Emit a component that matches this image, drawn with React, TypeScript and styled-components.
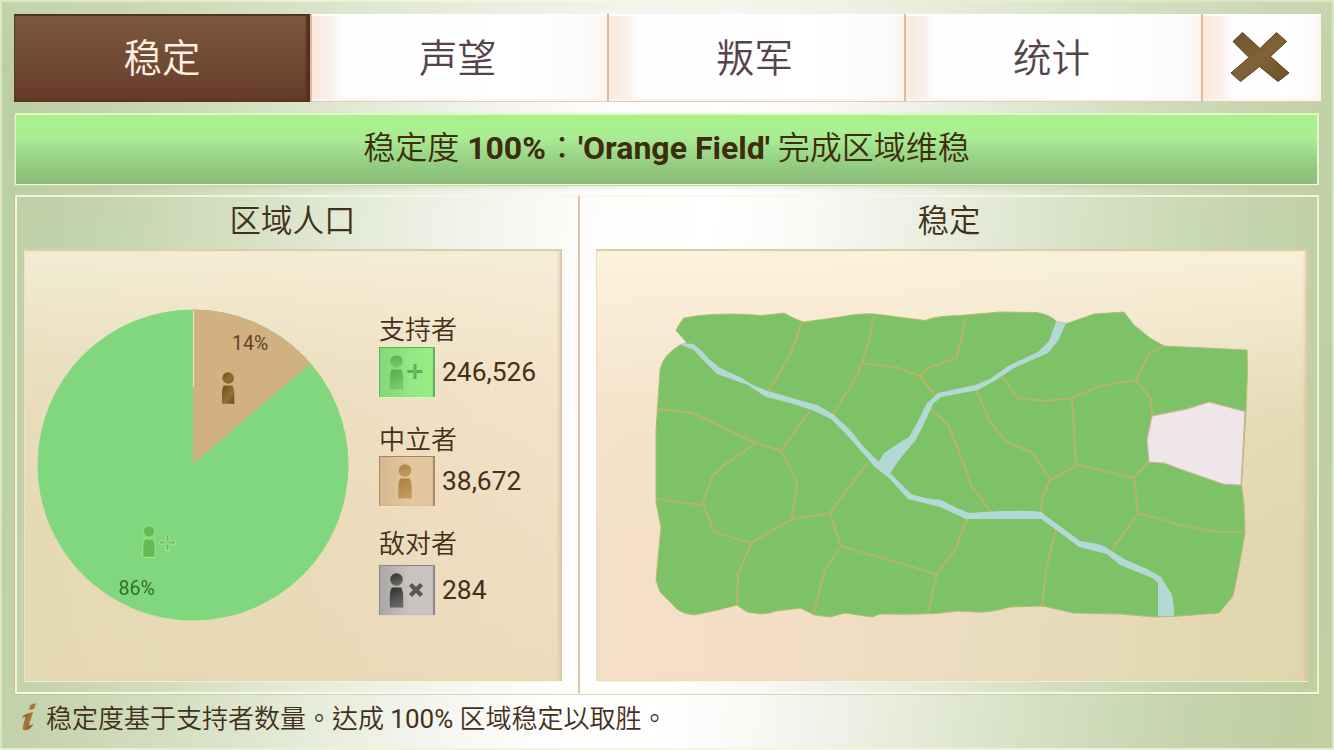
import React from "react";
import styled, { createGlobalStyle } from "styled-components";

const GlobalStyle = createGlobalStyle`
  * { box-sizing: border-box; }
  html, body { margin: 0; padding: 0; }
  body { font-family: Roboto, "Noto Sans CJK TC", sans-serif; overflow: hidden; }
`;

const Screen = styled.main`
  width: 1334px;
  height: 750px;
  padding: 12px 12px 0 13px;
  display: flex;
  flex-direction: column;
  color: #43301a;
  border: 2px solid rgba(236, 246, 206, 0.6);
  border-bottom-color: rgba(244, 248, 222, 0.7);
  background:
    linear-gradient(180deg, rgba(215, 224, 196, 0.3) 0, rgba(240, 236, 220, 0) 60px),
    linear-gradient(97deg, #b9cfa2 0%, #c5d3ae 9%, #d4dfc0 18%, #e6ecdb 28%, #f5f6f0 37%, #fefefd 45%, #ffffff 52%,
      #f7f7f3 60%, #e6ebda 70%, #d3dfc0 80%, #c5d3ac 90%, #bfcfa3 97%, #c3d0a0 100%);
`;

const TabBar = styled.nav`
  display: flex;
  height: 88px;
  width: 1307px;
  margin-left: -1px;
`;

const Tab = styled.button<{ $active?: boolean }>`
  width: ${(p) => (p.$active ? 296 : 297)}px;
  height: 88px;
  padding: ${(p) => (p.$active ? "0 0 5px" : "0 4px 5px 0")};
  border: 0;
  border-left: ${(p) => (p.$active ? "0" : "2px solid #dcbb9c")};
  border-bottom: ${(p) => (p.$active ? "0" : "1px solid #e2cdbd")};
  font-family: "Noto Sans CJK TC", sans-serif;
  font-weight: 350;
  font-size: 38.5px;
  line-height: 1;
  color: ${(p) => (p.$active ? "#fff1e3" : "#54434c")};
  background: ${(p) =>
    p.$active
      ? "linear-gradient(180deg, #7d5a3d 0%, #78513a 25%, #724a34 55%, #643a27 100%)"
      : "linear-gradient(90deg, #fbe9db 0, #faf0ea 18px, #fefefe 30px, #ffffff 70%, #fafafa 94%, #fdf2e8 100%)"};
  box-shadow: ${(p) =>
    p.$active
      ? "inset -4px 0 2px #53301a, inset 0 2px 1px #52331c, inset 0 -3px 2px #5b3823, inset 1px 0 0 #5b3924"
      : "inset 0 2px 0 #ffffff, inset 0 -2px 1px #fff3ee"};
`;

const CloseTab = styled(Tab)`
  width: 120px;
  display: flex;
  align-items: flex-start;
  justify-content: center;
  padding: 17px 5px 0 0;
`;

const Banner = styled.section`
  width: 1304px;
  height: 72px;
  margin-top: 11px;
  display: flex;
  align-items: center;
  justify-content: center;
  padding-bottom: 3px;
  font-size: 32px;
  font-weight: 350;
  line-height: 1;
  white-space: pre;
  color: #3d2c0d;
  border: 2px solid #e4f7c8;
  border-width: 2px 2px 1px 1px;
  border-bottom-color: #f7fbd8;
  background: linear-gradient(180deg, #a6f389 0%, #a9f18e 16%, #aaea94 34%, #9bd788 58%, #91c97e 78%, #8dbd7c 100%);
  box-shadow: 0 1px 0 #cdd6ae, -1px 0 0 #d4d69f, 0 3px 4px rgba(190, 200, 160, 0.35);

  strong { font-weight: 700; }
`;

const Panels = styled.div`
  display: flex;
  width: 1304px;
  height: 500px;
  margin-top: 10px;
`;

const Panel = styled.section<{ $width: number; $side: "left" | "right" }>`
  width: ${(p) => p.$width}px;
  height: 499px;
  padding: ${(p) => (p.$side === "left" ? "2px 16px 0 7px" : "2px 9px 0 16px")};
  border-top: 2px solid rgba(246, 250, 226, 0.85);
  border-left: 2px solid ${(p) => (p.$side === "left" ? "#f1f6d9" : "#dfc5a8")};
  border-right: ${(p) => (p.$side === "left" ? "0" : "2px solid #eaf3d2")};
  border-bottom: 2px solid rgba(250, 252, 228, 0.9);
  box-shadow: ${(p) => (p.$side === "left" ? "-1px 0 0 #cdbd83, " : "")}0 1px 0 rgba(196, 176, 140, 0.5);
`;

const PanelTitle = styled.h2<{ $shift: number }>`
  margin: 0;
  height: 50px;
  padding: 3px ${(p) => p.$shift}px 0 0;
  text-align: center;
  font-family: "Noto Sans CJK TC", sans-serif;
  font-weight: 350;
  font-size: 31.5px;
  line-height: 32px;
`;

const Inset = styled.div<{ $tone: "left" | "right" }>`
  display: flex;
  height: 432px;
  overflow: hidden;
  border-top: 2px solid #dfcda9;
  border-right: 2px solid #dcc8a2;
  border-left: 1px solid #eee0c4;
  box-shadow: 0 1px 0 rgba(248, 246, 220, 0.8), inset -2px 0 2px rgba(206, 176, 134, 0.3);
  background: ${(p) =>
    p.$tone === "left"
      ? "linear-gradient(180deg, rgba(247,242,220,0.75) 0%, rgba(244,236,212,0.2) 28%, rgba(226,204,160,0.1) 60%, rgba(228,214,174,0.45) 100%), linear-gradient(90deg, #e6dbb8 0%, #ebdcbd 50%, #f3e1c8 100%)"
      : "linear-gradient(180deg, rgba(254,246,226,0.8) 0%, rgba(246,236,212,0.2) 40%, rgba(226,204,160,0) 70%), linear-gradient(95deg, #f4e0c8 0%, #f2dfc6 30%, #e9dcbd 60%, #e0d5ac 100%)"};
`;

const Chart = styled.svg`
  width: 350px;
  height: 431px;
  flex: none;
  font-family: Roboto, sans-serif;
`;

const Map = styled.svg`
  width: 710px;
  height: 431px;
  flex: none;
`;

const Legend = styled.dl`
  margin: 0;
  padding-top: 62px;
  margin-left: 3px;
  width: 175px;
`;

const LegendItem = styled.div<{ $height: number }>`
  height: ${(p) => p.$height}px;
`;

const LegendLabel = styled.dt<{ $height: number }>`
  height: ${(p) => p.$height}px;
  padding-left: 1px;
  font-family: "Noto Sans CJK TC", sans-serif;
  font-size: 26px;
  font-weight: 350;
  line-height: 29px;
`;

const LegendValue = styled.dd`
  margin: 0;
  display: flex;
  align-items: center;
  gap: 6px;
  font-size: 26.4px;
  line-height: 50px;
`;

type Kind = "support" | "neutral" | "hostile";

const swatches: Record<Kind, { bg: string; edge: string; rim: string }> = {
  support: { bg: "linear-gradient(90deg, #82d779, #93e784 55%, #97f083)", edge: "#68a663", rim: "#d8fbc0" },
  neutral: { bg: "linear-gradient(90deg, #d6b78f, #e4c6a0 55%, #e2c59f)", edge: "#a98861", rim: "#f1dfc2" },
  hostile: { bg: "linear-gradient(90deg, #a9a5a3, #c9c4c0 55%, #c8c3c1)", edge: "#8d878a", rim: "#e0d8c8" },
};

const Swatch = styled.span<{ $kind: Kind }>`
  display: flex;
  width: 58px;
  height: 52px;
  border: 1px solid ${(p) => swatches[p.$kind].rim};
  background: ${(p) => swatches[p.$kind].bg};
  box-shadow: inset 1px 1px 0 ${(p) => swatches[p.$kind].edge}, inset -2px 0 1px ${(p) => swatches[p.$kind].edge};
`;

const Footer = styled.footer`
  display: flex;
  align-items: center;
  height: 44px;
  margin-top: 2px;
  padding-left: 5px;
  font-size: 26px;
  line-height: 1;
`;

const Hint = styled.p`
  margin: 0;
  font-weight: 350;

  span { font-weight: 400; }
`;

const InfoIcon = styled.svg`
  width: 26px;
  height: 34px;
  flex: none;
  margin-bottom: 2px;
`;

function Person({ x, y, fill, scale = 1 }: { x: number; y: number; fill: string; scale?: number }) {
  return (
    <g transform={`translate(${x} ${y}) scale(${scale})`} fill={fill}>
      <circle cx="7" cy="6.5" r="6.3" />
      <path d="M2.2 14.6h9.6c1.3 3 1.9 5.5 1.9 9v11H.3v-11c0-3.5.6-6 1.9-9z" />
    </g>
  );
}

function SwatchIcon({ kind }: { kind: Kind }) {
  const id = `fig-${kind}`;
  const stops = {
    support: ["#58ad50", "#79c96a"],
    neutral: ["#a88146", "#c39a5c"],
    hostile: ["#2e302e", "#666665"],
  }[kind];
  return (
    <svg width="56" height="50" viewBox="0 0 56 50">
      <defs>
        <linearGradient id={id} x1="0" y1="0" x2="0.3" y2="1">
          <stop offset="0" stopColor={stops[0]} />
          <stop offset="1" stopColor={stops[1]} />
        </linearGradient>
      </defs>
      <Person x={kind === "neutral" ? 19 : 10.5} y={8} fill={`url(#${id})`} />
      {kind === "support" && (
        <g stroke="#5cad55" strokeWidth="3" fill="none">
          <path d="M28.5 24.5h6M37.5 24.5h6M36 17v6M36 26v6" />
          <path d="M33.5 24.5h5" strokeWidth="2" />
        </g>
      )}
      {kind === "hostile" && <path d="M31.5 19.5l11 11M42.5 19.5l-11 11" stroke="#5c5754" strokeWidth="4.4" />}
    </svg>
  );
}

function PopulationChart() {
  return (
    <Chart viewBox="25 251 350 431">
      <defs>
        <linearGradient id="brownFig" x1="0" y1="0" x2="1" y2="1">
          <stop offset="0" stopColor="#6f4d14" />
          <stop offset="0.6" stopColor="#936f38" />
          <stop offset="1" stopColor="#6a4815" />
        </linearGradient>
      </defs>
      <circle cx="193" cy="465" r="155.5" fill="#80d77d" />
      <path d="M193 464V309.5a155.5 155.5 0 0 1 117.5 54z" fill="#d1b081" />
      <path d="M193.5 310.5V387" stroke="#ece3b2" strokeWidth="1.2" />
      <text x="232" y="349.5" fontSize="19.5" fill="#654223">14%</text>
      <Person x={221.7} y={372} scale={0.92} fill="url(#brownFig)" />
      <g stroke="#a6e88c" strokeWidth="1">
        <Person x={142.5} y={525.5} scale={0.92} fill="#67b956" />
      </g>
      <path d="M167.5 535.5v5M167.5 545v6M159.5 542.5h5M170 542.5h6" stroke="#b0ea91" strokeWidth="4" />
      <path d="M167.5 536v4M167.5 545v5M160 542.5h4M170 542.5h5" stroke="#6dba58" strokeWidth="2" />
      <text x="118.5" y="595" fontSize="19.5" fill="#356f2b">86%</text>
    </Chart>
  );
}

const LAND =
  "M676 330.5Q680 322 684 318L700 315.5Q728 312.5 762 315.5L784 313Q796 320 804 322L840 317Q860 313 875 314L925 320.5Q935 316 960 315.5L1000 312L1036 312.5Q1050 314 1057 322L1067 323.5L1094 314L1124 312L1134 325L1150 338L1164 346L1247 350L1247.5 370L1246 411L1241.5 485L1244 505L1245 533L1238 572L1233 596L1219 613L1180 616L1155 617L1120 614L1073 613L1043 606L1010 607Q990 613 975 612L957 611Q935 615 880 614L872 617L845 613L830 617L815 615L800 608L777 611Q768 614 760 614L747 612L737 605L718 610L694 615Q684 614 678 610L660 592L656 580L661 527L656 502V430L660 370Q663 355 680 345L687 343z";

const BORDERS = [
  "M802 322L790 355L768 392",
  "M874 316L869 340L862 363L857 376L832 416",
  "M862 363L896 367L920 376L928 368L957 358L966 317",
  "M920 376L935 396",
  "M929 408L948 424L960 455L972 487L992 513",
  "M977 391L990 422L1007 442L1033 453L1050 480L1078 465L1134 478L1149 461L1164 463",
  "M1000 373L1017 398L1045 401L1072 398L1100 386L1136 380L1150 353L1164 346",
  "M1072 398L1076 465",
  "M1136 380L1151 399L1152 416",
  "M1050 480L1042 498L1041 514",
  "M1134 478L1138 513L1112 550",
  "M1138 513L1180 525L1217 532L1245 532",
  "M1056 529L1046 570L1042 607",
  "M967 518L955 550L937 573L928 613",
  "M657 409L692 413L756 443L781 451L809 412",
  "M756 443L724 465L713 475L703 503L714 532L751 543L792 519L830 513L867 463",
  "M781 451Q795 475 797 485L792 519",
  "M656 499L703 505",
  "M751 543L738 575L737 605",
  "M830 513L841 546L936 574",
  "M841 546L825 570L813 615",
];

function RegionMap() {
  return (
    <Map viewBox="597 251 710 431">
      <path d={LAND} fill="#7dc267" stroke="#b0bd78" strokeWidth="1" />
      <g fill="none" stroke="#b3b765" strokeWidth="2.2" strokeLinejoin="round">
        {BORDERS.map((d) => (
          <path key={d} d={d} />
        ))}
      </g>
      <path
        d="M1152 416L1187 409L1209 402L1245 411.5L1241 485L1223 484L1180 469L1164 463L1149 462L1147 440z"
        fill="#eee6e8"
        stroke="#cfb59c"
        strokeWidth="1.2"
      />
      <g fill="#b4d8d5">
        <path d="M679 344Q688 343 693 344Q702 350 708 358L720 368L740 377L753 385L768 391L792 398L817 405L833 414L851 431L864 447L878 461L891 474L911 494L925 498L941 500L957 508L969 513L1000 511Q1030 510 1041 512L1053 521L1080 541L1095 543.5Q1104 545 1110 550L1124 559L1147 569L1161 577L1171 593Q1174 598 1174 616H1158L1158 583Q1154 578 1145 575L1120 565L1107 554L1095 551L1079 547L1055 529L1041 519L1000 519L966 519L940 507L908 499L889 478L875 467L861 451L847 435L831 419L812 410L790 403L766 397L748 385L717 374L700 357L694 350z" />
        <path d="M1056 322L1066 323L1058 341L1048 353L1014 368L996 380L978 390L941 397L933 404L923 426L915 441L899 460L889 475L873 465L880 460L884 453L899 443L909 437L917 423L927 403L938 393L975 385L990 379L1008 366L1038 352L1049 341z" />
      </g>
    </Map>
  );
}

function CloseIcon() {
  return (
    <svg width="60" height="54" viewBox="0 0 60 54">
      <defs>
        <linearGradient id="closeFill" x1="0" y1="0" x2="1" y2="1">
          <stop offset="0" stopColor="#6c5528" />
          <stop offset="0.5" stopColor="#806238" />
          <stop offset="1" stopColor="#6d5428" />
        </linearGradient>
      </defs>
      <path
        d="M12.5 1.5L30 17.5L46.5 1.5L56.5 10.5L40.5 25.5L59 42L48 50.5L29.5 35.5L10.5 50.5L1 42L19 26.5L3 10.5z"
        fill="url(#closeFill)"
        stroke="#57421a"
        strokeWidth="1"
      />
    </svg>
  );
}

function Info() {
  return (
    <InfoIcon viewBox="0 0 26 34">
      <defs>
        <linearGradient id="infoFill" x1="0" y1="0" x2="1" y2="1">
          <stop offset="0" stopColor="#74501d" />
          <stop offset="0.5" stopColor="#a87840" />
          <stop offset="1" stopColor="#74501d" />
        </linearGradient>
      </defs>
      <g fill="url(#infoFill)" stroke="#e6dcae" strokeWidth="0.5">
        <path d="M10 4.5Q12 2 16.5 2L14.5 7.5Q12 9.5 8.5 9z" />
        <path d="M3 14.5Q8 11 13.5 10.8L9.3 24.3Q11.500 24 14 22Q11.500 28.500 6 29.500H4Q1.500 28.500 2.700 24.500L5.200 16Q3 16.500 1.500 18z" />
      </g>
    </InfoIcon>
  );
}

const groups: { kind: Kind; label: string; value: string; height: number; gap: number }[] = [
  { kind: "support", label: "支持者", value: "246,526", height: 110, gap: 33 },
  { kind: "neutral", label: "中立者", value: "38,672", height: 104, gap: 32 },
  { kind: "hostile", label: "敌对者", value: "284", height: 100, gap: 37 },
];

export default function App() {
  return (
    <Screen>
      <GlobalStyle />
      <TabBar>
        <Tab $active>稳定</Tab>
        <Tab>声望</Tab>
        <Tab>叛军</Tab>
        <Tab>统计</Tab>
        <CloseTab aria-label="关闭">
          <CloseIcon />
        </CloseTab>
      </TabBar>
      <Banner>
        稳定度 <strong>100%</strong>：<strong>'Orange Field'</strong> 完成区域维稳
      </Banner>
      <Panels>
        <Panel $width={563} $side="left">
          <PanelTitle $shift={1}>区域人口</PanelTitle>
          <Inset $tone="left">
            <PopulationChart />
            <Legend>
              {groups.map((g) => (
                <LegendItem key={g.kind} $height={g.height}>
                  <LegendLabel $height={g.gap}>{g.label}</LegendLabel>
                  <LegendValue>
                    <Swatch $kind={g.kind}>
                      <SwatchIcon kind={g.kind} />
                    </Swatch>
                    {g.value}
                  </LegendValue>
                </LegendItem>
              ))}
            </Legend>
          </Inset>
        </Panel>
        <Panel $width={741} $side="right">
          <PanelTitle $shift={6}>稳定</PanelTitle>
          <Inset $tone="right">
            <RegionMap />
          </Inset>
        </Panel>
      </Panels>
      <Footer>
        <Info />
        <Hint>
          稳定度基于支持者数量。达成 <span>100%</span> 区域稳定以取胜。
        </Hint>
      </Footer>
    </Screen>
  );
}
